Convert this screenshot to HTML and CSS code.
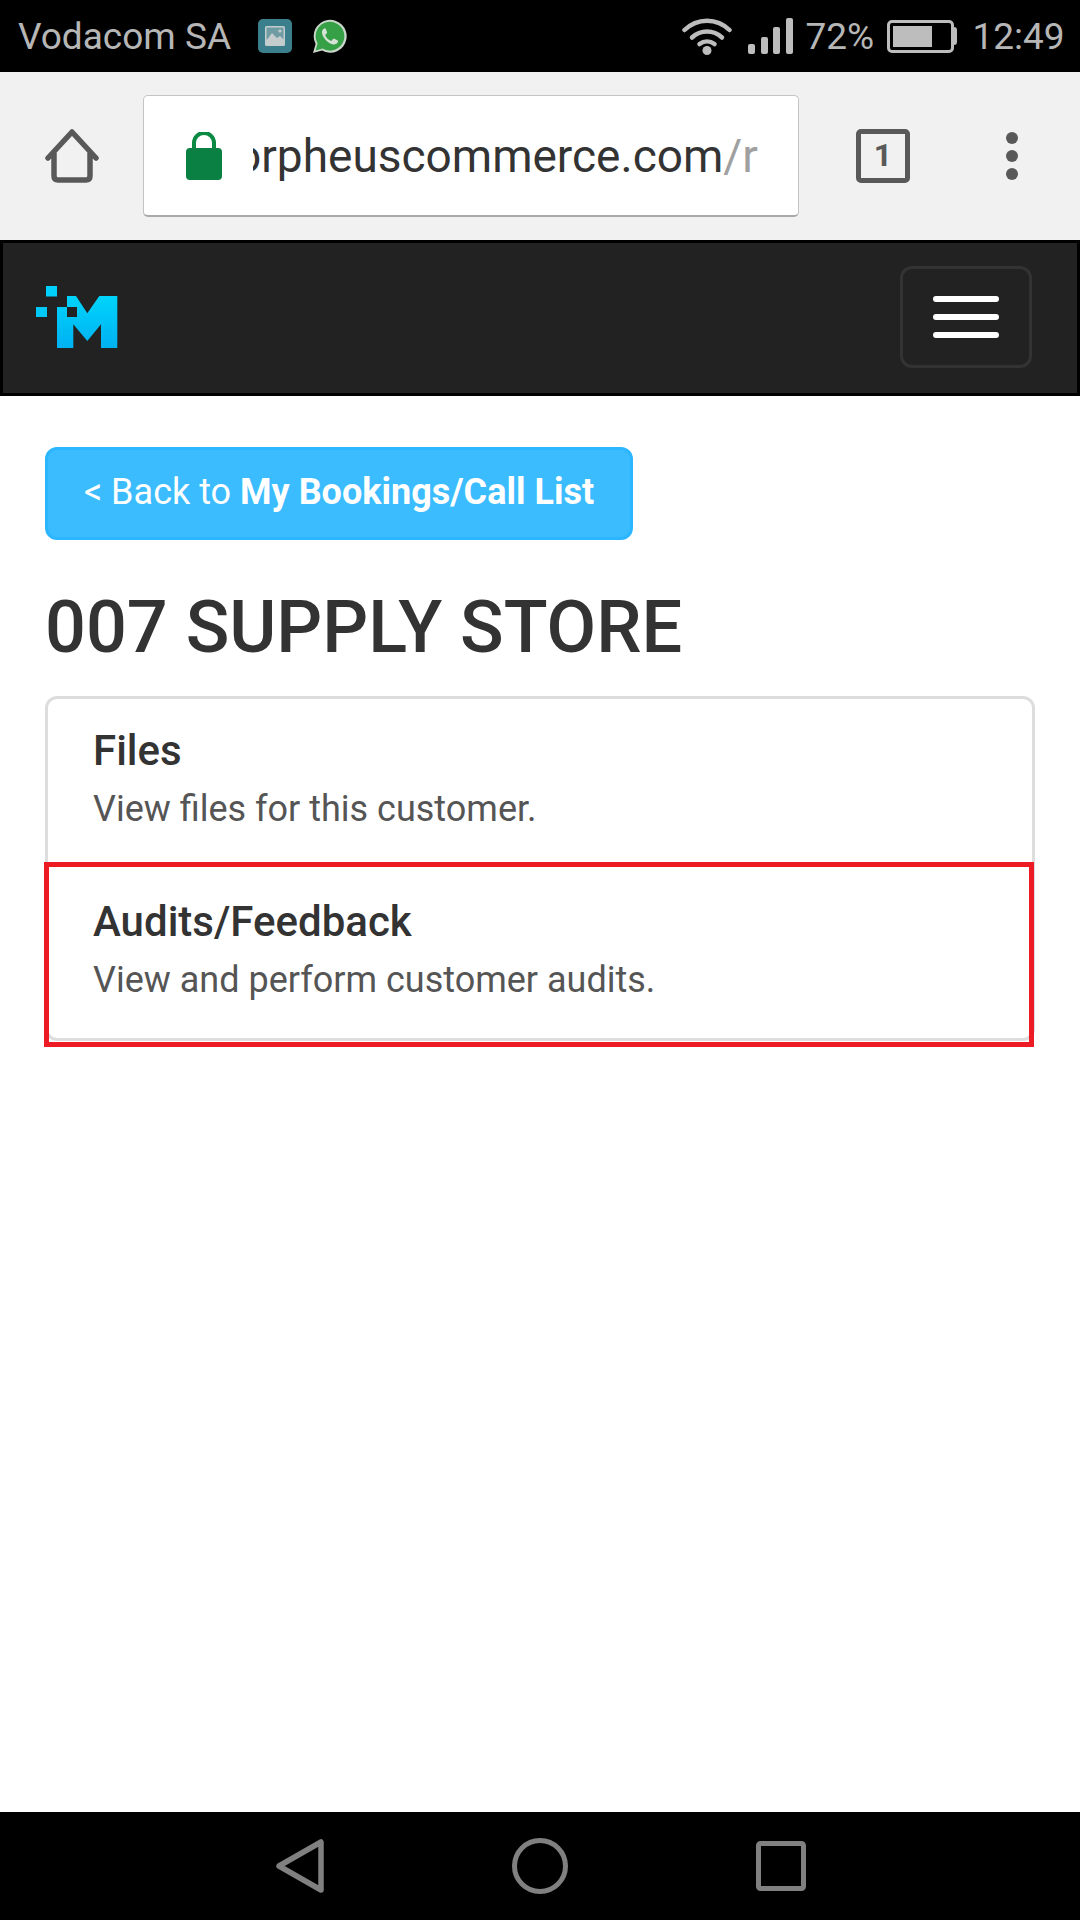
FILE: index.html
```html
<!DOCTYPE html>
<html>
<head>
    <meta charset="UTF-8">
    <title>007 Supply Store</title>
    <link rel="stylesheet" href="styles.css">
</head>
<body>
    <!-- phone status bar -->
    <div class="status-bar">
        <span class="carrier">Vodacom SA</span>
        <svg class="note-photo" width="34" height="34" viewBox="0 0 34 34">
            <rect width="34" height="34" rx="5" fill="#3b7f8c"/>
            <rect x="7" y="7" width="20" height="20" rx="1.5" fill="#c4cccd"/>
            <rect x="8.5" y="8.5" width="17" height="12" fill="#6f9ba3"/>
            <path d="M8 22 L14 14 L19 19 L22 17 L26 21 L26 26 L8 26 Z" fill="#c4cccd"/>
            <circle cx="22" cy="12" r="1.6" fill="#c4cccd"/>
        </svg>
        <svg class="note-chat" width="35" height="35" viewBox="0 0 35 35">
            <path d="M1 34 L3.6 25 A16.5 16.5 0 1 1 10 31.6 Z" fill="#c9d6ca"/>
            <path d="M3.6 31.4 L5.6 24.6 A14.4 14.4 0 1 1 10.6 29.6 Z" fill="#36a046"/>
            <path d="M12.4 9.4 C11 9.8 9.6 11.6 10 14 C10.8 19 16 24.6 21.4 25.4 C23.8 25.8 25.8 24.2 26 22.6 C26.1 21.8 25.8 21.6 25.2 21.2 L22.4 19.8 C21.8 19.5 21.4 19.6 21 20.1 L19.8 21.6 C19.4 22 19 22 18.5 21.8 C16.4 20.8 14.4 18.8 13.4 16.8 C13.2 16.3 13.2 15.9 13.6 15.5 L14.8 14.2 C15.1 13.8 15.2 13.4 15 12.9 L13.8 10 C13.5 9.4 13 9.2 12.4 9.4 Z" fill="#d6e2d7"/>
        </svg>
        <svg class="wifi" width="50" height="37" viewBox="0 0 50 37">
            <g fill="none" stroke="#bdbdbd" stroke-width="4.5" stroke-linecap="round">
                <path d="M2.5 12 C15 -0.5 35 -0.5 47.5 12"/>
                <path d="M10 19.5 C18.5 11.5 31.5 11.5 40 19.5"/>
                <path d="M17.5 26 C22 22.5 28 22.5 32.5 26"/>
            </g>
            <circle cx="25" cy="32.5" r="4.5" fill="#bdbdbd"/>
        </svg>
        <div class="signal">
            <span class="bar bar1"></span>
            <span class="bar bar2"></span>
            <span class="bar bar3"></span>
            <span class="bar bar4"></span>
        </div>
        <span class="percent">72%</span>
        <div class="battery">
            <div class="battery-body"><div class="battery-fill"></div></div>
            <div class="battery-cap"></div>
        </div>
        <span class="clock">12:49</span>
    </div>

    <!-- browser toolbar -->
    <div class="toolbar">
        <svg class="home-icon" width="54" height="54" viewBox="0 0 54 54">
            <path d="M3 29 L27 3 L51 29 M9 24 L9 47 Q9 51 13 51 L41 51 Q45 51 45 47 L45 24" fill="none" stroke="#595959" stroke-width="5.5" stroke-linecap="round" stroke-linejoin="round"/>
        </svg>
        <div class="url-box">
            <svg class="lock" width="36" height="48" viewBox="0 0 36 48">
                <path d="M8 18 L8 11 A10 10 0 0 1 28 11 L28 18" fill="none" stroke="#0b8a43" stroke-width="4"/>
                <rect y="16" width="36" height="32" rx="4" fill="#0b8043"/>
            </svg>
            <div class="url-clip">
                <span class="url-text">orpheuscommerce.com<span class="url-path">/r</span></span>
            </div>
        </div>
        <div class="tab-count">1</div>
        <div class="menu-dots">
            <span class="dot"></span>
            <span class="dot"></span>
            <span class="dot"></span>
        </div>
    </div>

    <!-- site header -->
    <nav class="navbar">
        <svg class="logo" width="82" height="62" viewBox="0 0 82 62">
            <defs>
                <linearGradient id="logoBlue" x1="0" y1="0" x2="0" y2="1">
                    <stop offset="0" stop-color="#00d4fb"/>
                    <stop offset="1" stop-color="#00b1f2"/>
                </linearGradient>
            </defs>
            <rect x="10" y="0" width="11" height="10.5" fill="#00d0fa"/>
            <rect x="0" y="21" width="11" height="10" fill="#00c8f8"/>
            <path d="M21 21 L31 21 L31 10 L40 10 L51.300 27.300 L63.300 10 L81.300 10 L81.300 62 L65 62 L65 38.300 L51.300 55 L37.300 38.300 L37.300 62 L21 62 Z" fill="url(#logoBlue)"/>
            <rect x="31" y="21" width="10" height="10" fill="#222222"/>
        </svg>
        <button class="nav-toggle" type="button">
            <span class="toggle-bar"></span>
            <span class="toggle-bar"></span>
            <span class="toggle-bar"></span>
        </button>
    </nav>

    <div class="page">
        <a class="back-btn" href="#">&lt; Back to <b>My Bookings/Call List</b></a>
        <h1 class="store-name">007 SUPPLY STORE</h1>
        <div class="list-card">
            <a class="list-item item-first" href="#">
                <h4 class="item-title">Files</h4>
                <p class="item-text">View files for this customer.</p>
            </a>
            <a class="list-item item-second" href="#">
                <h4 class="item-title">Audits/Feedback</h4>
                <p class="item-text">View and perform customer audits.</p>
            </a>
            <!-- red annotation drawn over the second row -->
            <div class="highlight"></div>
        </div>
    </div>

    <!-- android buttons -->
    <div class="nav-keys">
        <svg width="48" height="54" viewBox="0 0 48 54">
            <path d="M3 27 L45 3 L45 51 Z" fill="none" stroke="#808080" stroke-width="5.500" stroke-linejoin="round"/>
        </svg>
        <svg width="56" height="56" viewBox="0 0 56 56">
            <circle cx="28" cy="28" r="25.500" fill="none" stroke="#808080" stroke-width="5"/>
        </svg>
        <svg width="50" height="50" viewBox="0 0 50 50">
            <rect x="2.500" y="2.500" width="45" height="45" rx="2" fill="none" stroke="#808080" stroke-width="5"/>
        </svg>
    </div>
</body>
</html>
```

FILE: styles.css
```css
html, body {
    margin: 0;
    padding: 0;
}
body {
    width: 1080px;
    height: 1920px;
    display: flex;
    flex-direction: column;
    background-color: #ffffff;
    font-family: Roboto, "Liberation Sans", sans-serif;
    color: #333333;
}

/* status bar */
.status-bar {
    height: 72px;
    flex: none;
    display: flex;
    align-items: center;
    background-color: #000000;
    color: #b6b6b6;
    font-size: 37px;
    padding-left: 18px;
}
.carrier {
    width: 240px;
}
.note-photo {
    flex: none;
    margin-left: 0;
}
.note-chat {
    flex: none;
    margin-left: 20px;
}
.wifi {
    flex: none;
    margin-left: 335px;
}
.signal {
    display: flex;
    align-items: flex-end;
    gap: 5.500px;
    height: 36px;
    margin-left: 16px;
}
.bar {
    width: 7px;
    border-radius: 2px;
    background-color: #bdbdbd;
}
.bar1 { height: 10px; }
.bar2 { height: 17px; }
.bar3 { height: 27px; }
.bar4 { height: 36px; }
.percent {
    width: 70px;
    margin-left: 13px;
}
.battery {
    display: flex;
    align-items: center;
    margin-left: 11px;
}
.battery-body {
    width: 55px;
    height: 27px;
    border: 3px solid #bdbdbd;
    border-radius: 5px;
    padding: 3px;
    box-sizing: content-box;
    width: 55px;
    height: 21px;
}
.battery-fill {
    width: 72%;
    height: 100%;
    background-color: #bdbdbd;
}
.battery-cap {
    width: 3px;
    height: 18px;
    background-color: #bdbdbd;
    border-radius: 0 3px 3px 0;
}
.clock {
    margin-left: 16px;
}

/* browser toolbar */
.toolbar {
    height: 168px;
    flex: none;
    display: flex;
    align-items: center;
    background-color: #f1f1f1;
    padding-left: 45px;
}
.home-icon {
    flex: none;
}
.url-box {
    width: 656px;
    height: 122px;
    flex: none;
    box-sizing: border-box;
    margin-left: 44px;
    display: flex;
    align-items: center;
    background-color: #ffffff;
    border: 1px solid #c4c4c4;
    border-bottom: 2px solid #a9a9a9;
    border-radius: 5px;
    padding-left: 42px;
}
.lock {
    flex: none;
}
.url-clip {
    width: 521px;
    margin-left: 31px;
    overflow: hidden;
    white-space: nowrap;
}
.url-text {
    display: block;
    margin-left: -18px;
    font-size: 46px;
    color: #333333;
}
.url-path {
    color: #a0a0a0;
}
.tab-count {
    width: 54px;
    height: 54px;
    flex: none;
    box-sizing: border-box;
    margin-left: 57px;
    border: 5.500px solid #595959;
    border-radius: 5px;
    color: #595959;
    font-size: 32px;
    font-weight: 700;
    line-height: 43px;
    text-align: center;
}
.menu-dots {
    display: flex;
    flex-direction: column;
    gap: 6px;
    margin-left: 96px;
}
.dot {
    width: 12px;
    height: 12px;
    border-radius: 50%;
    background-color: #595959;
}

/* site header */
.navbar {
    height: 156px;
    flex: none;
    box-sizing: border-box;
    display: flex;
    align-items: center;
    justify-content: space-between;
    background-color: #222222;
    border: 3px solid #000000;
    padding: 0 45px 2px 33px;
}
.nav-toggle {
    width: 132px;
    height: 102px;
    box-sizing: border-box;
    display: flex;
    flex-direction: column;
    align-items: center;
    justify-content: center;
    gap: 12px;
    padding: 0;
    background-color: transparent;
    border: 3px solid #333333;
    border-radius: 12px;
}
.toggle-bar {
    width: 66px;
    height: 6px;
    border-radius: 3px;
    background-color: #ffffff;
}

/* page content */
.page {
    flex: 1;
    padding: 51px 45px 0;
}
.back-btn {
    display: inline-block;
    width: 588px;
    height: 93px;
    box-sizing: border-box;
    background-color: #3bbcff;
    border: 3px solid #2cb6ff;
    border-radius: 12px;
    color: #ffffff;
    font-size: 36px;
    line-height: 84px;
    text-align: center;
    text-decoration: none;
}
.back-btn b {
    font-weight: 700;
}
.store-name {
    margin: 48px 0 0;
    font-size: 72px;
    font-weight: 500;
    line-height: 80px;
    color: #333333;
}
.list-card {
    position: relative;
    width: 990px;
    box-sizing: border-box;
    margin-top: 28px;
    border: 3px solid #dddddd;
    border-radius: 12px;
}
.list-item {
    display: block;
    box-sizing: border-box;
    padding: 30px 45px 0;
    text-decoration: none;
}
.item-first {
    height: 171px;
    padding-top: 27px;
}
.item-second {
    height: 168px;
    padding-top: 27px;
}
.item-title {
    margin: 0;
    font-size: 42px;
    font-weight: 500;
    line-height: 50px;
    color: #333333;
}
.item-text {
    margin: 11px 0 0;
    font-size: 36px;
    line-height: 44px;
    color: #555555;
}
.highlight {
    position: absolute;
    left: -4px;
    right: -2px;
    top: 163px;
    bottom: -9px;
    border: 5px solid #ed1c24;
}

/* android buttons */
.nav-keys {
    height: 108px;
    flex: none;
    display: flex;
    align-items: center;
    padding-left: 276px;
    background-color: #000000;
    gap: 188px;
}
```
